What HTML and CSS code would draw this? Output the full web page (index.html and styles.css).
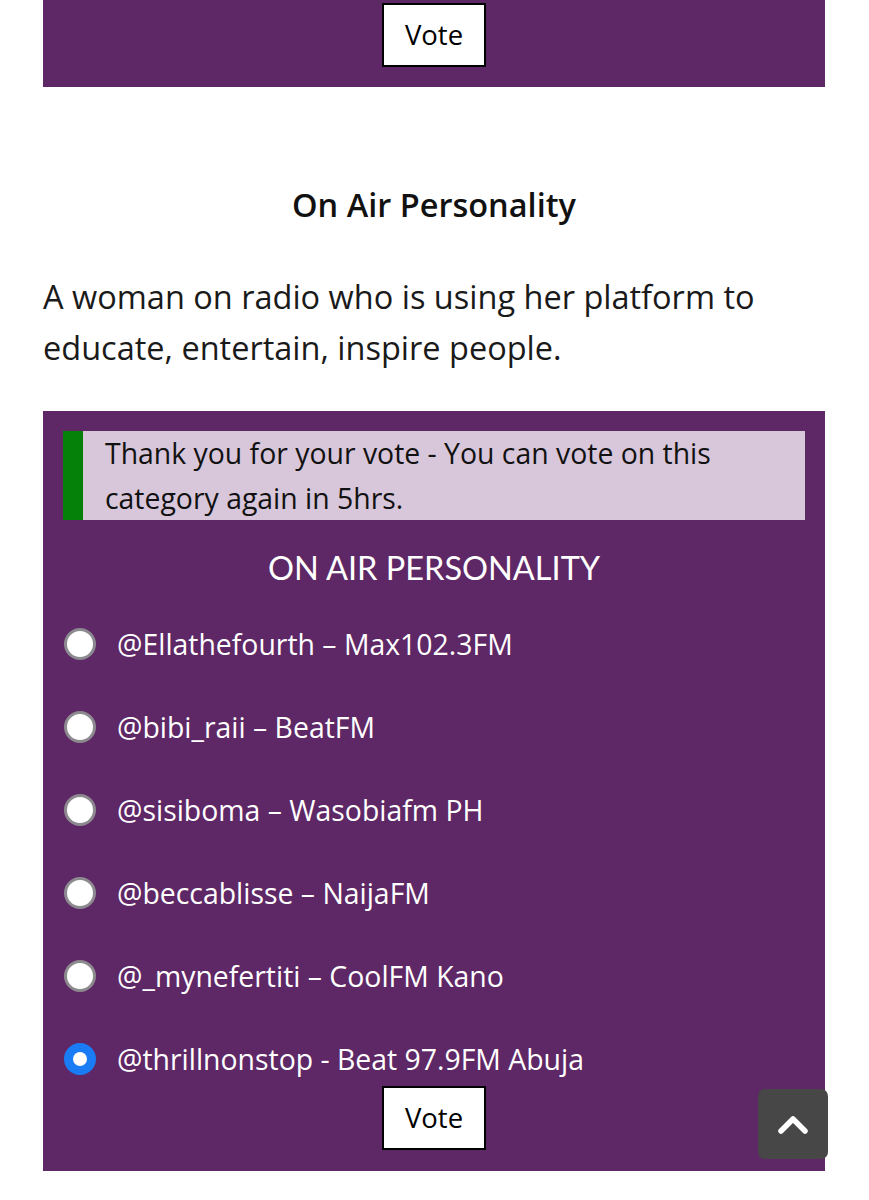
FILE: index.html
```html
<!DOCTYPE html>
<html>
<head>
<meta charset="utf-8">
<link rel="stylesheet" href="styles.css">
</head>
<body>
<div class="page">
  <div class="panel panel-top">
    <button class="vote-btn">Vote</button>
  </div>

  <h2 class="cat-title">On Air Personality</h2>
  <p class="cat-desc">A woman on radio who is using her platform to educate, entertain, inspire people.</p>

  <div class="panel panel-main">
    <div class="notice">Thank you for your vote - You can vote on this category again in 5hrs.</div>
    <h3 class="poll-title">ON AIR PERSONALITY</h3>
    <ul class="options">
      <li class="option"><input type="radio" name="oap" class="radio"><span>@Ellathefourth – Max102.3FM</span></li>
      <li class="option"><input type="radio" name="oap" class="radio"><span>@bibi_raii – BeatFM</span></li>
      <li class="option"><input type="radio" name="oap" class="radio"><span>@sisiboma – Wasobiafm PH</span></li>
      <li class="option"><input type="radio" name="oap" class="radio"><span>@beccablisse – NaijaFM</span></li>
      <li class="option"><input type="radio" name="oap" class="radio"><span>@_mynefertiti – CoolFM Kano</span></li>
      <li class="option option-last"><input type="radio" name="oap" class="radio" checked><span>@thrillnonstop - Beat 97.9FM Abuja</span></li>
    </ul>
    <div class="vote-row"><button class="vote-btn">Vote</button></div>
  </div>
</div>

<a class="to-top" href="#">
  <svg width="32" height="22" viewBox="0 0 32 22"><path d="M4 18 L16 6 L28 18" fill="none" stroke="#fff" stroke-width="5.5" stroke-linecap="round" stroke-linejoin="round"/></svg>
</a>
</body>
</html>
```

FILE: styles.css
```css
html, body {
  margin: 0;
  padding: 0;
  background: #fff;
}
body {
  font-family: "Open Sans", "Liberation Sans", sans-serif;
  color: #1a1a1a;
}
.page {
  width: 782px;
  margin: 0 0 0 43px;
}
.panel {
  background: #5e2766;
  color: #fff;
}
.panel-top {
  height: 87px;
  display: flex;
  justify-content: center;
  align-items: flex-start;
  padding-top: 3px;
  box-sizing: border-box;
}
.vote-btn {
  width: 104px;
  height: 64px;
  background: #fff;
  border: 2px solid #000;
  border-radius: 0;
  font-family: "Open Sans", sans-serif;
  font-size: 27.5px;
  line-height: 1;
  color: #000;
  padding: 0;
  margin: 0;
}
.cat-title {
  margin: 96px 0 0;
  text-align: center;
  font-size: 32.5px;
  font-weight: 600;
  line-height: 44px;
  color: #111;
}
.cat-desc {
  margin: 44px 0 38px;
  font-size: 32.5px;
  line-height: 51px;
  color: #1a1a1a;
}
.panel-main {
  padding: 20px 20px 21px;
}
.notice {
  background: #d8c7da;
  border-left: 20px solid #058008;
  color: #111;
  font-size: 28.4px;
  line-height: 44.5px;
  padding: 0 20px 0 22px;
}
.poll-title {
  margin: 25px 0 0;
  text-align: center;
  font-family: Lato, "Open Sans", sans-serif;
  font-weight: 400;
  font-size: 32.5px;
  line-height: 46px;
  color: #fff;
}
.options {
  list-style: none;
  margin: 30px 0 0;
  padding: 0;
}
.option {
  display: flex;
  align-items: center;
  gap: 21px;
  height: 46px;
  margin-bottom: 37px;
  font-size: 28.4px;
  color: #fff;
}
.option-last {
  margin-bottom: 0;
}
.radio {
  appearance: none;
  -webkit-appearance: none;
  margin: 0 0 0 1px;
  width: 32px;
  height: 32px;
  border-radius: 50%;
  background: #fff;
  border: 3px solid #8d8a8f;
  box-sizing: border-box;
  flex: none;
}
.radio:checked {
  border: 9px solid #1a7cf5;
}
.vote-row {
  display: flex;
  justify-content: center;
  margin-top: 4px;
}
.to-top {
  position: fixed;
  left: 758px;
  top: 1089px;
  width: 70px;
  height: 70px;
  background: #474747;
  border-radius: 7px;
  display: flex;
  align-items: center;
  justify-content: center;
}
```
